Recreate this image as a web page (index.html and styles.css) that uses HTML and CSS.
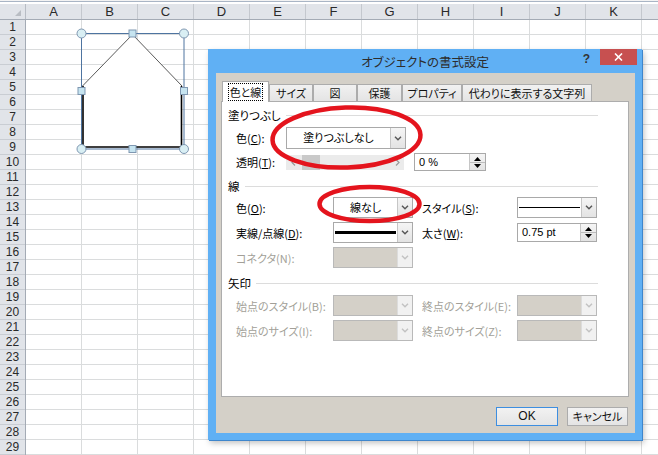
FILE: index.html
```html
<!DOCTYPE html>
<html lang="ja">
<head>
<meta charset="utf-8">
<title>オブジェクトの書式設定</title>
<link rel="stylesheet" href="styles.css">
</head>
<body>
<div class="sheet">
  <div class="topbar"></div>
  <div class="colhead">
    <div class="corner"></div>
    <div class="col">A</div><div class="col">B</div><div class="col">C</div><div class="col">D</div>
    <div class="col">E</div><div class="col">F</div><div class="col">G</div><div class="col">H</div>
    <div class="col">I</div><div class="col">J</div><div class="col">K</div><div class="col"></div>
  </div>
  <div class="grid">
    <div class="rownums">
      <div class="rn">1</div><div class="rn">2</div><div class="rn">3</div><div class="rn">4</div><div class="rn">5</div>
      <div class="rn">6</div><div class="rn">7</div><div class="rn">8</div><div class="rn">9</div><div class="rn">10</div>
      <div class="rn">11</div><div class="rn">12</div><div class="rn">13</div><div class="rn">14</div><div class="rn">15</div>
      <div class="rn">16</div><div class="rn">17</div><div class="rn">18</div><div class="rn">19</div><div class="rn">20</div>
      <div class="rn">21</div><div class="rn">22</div><div class="rn">23</div><div class="rn">24</div><div class="rn">25</div>
      <div class="rn">26</div><div class="rn">27</div><div class="rn">28</div><div class="rn">29</div>
    </div>
    <div class="cells"></div>
  </div>
</div>

<svg class="shape" width="200" height="160" viewBox="0 0 200 160">
  <polygon points="132.5,34.5 82.5,86 82.5,147 182,147 182,86" fill="#fff"/>
  <polyline points="82.5,86 132.5,34.5 182,86" fill="none" stroke="#5a5a5a" stroke-width="1"/>
  <polyline points="83,86 83,147 181.5,147 181.5,86" fill="none" stroke="#000" stroke-width="1.6"/>
  <rect x="81.5" y="33.5" width="102.5" height="115.5" fill="none" stroke="#4e74a0" stroke-width="1"/>
  <g fill="#d9eff4" stroke="#7f97b1" stroke-width="1">
    <circle cx="81.5" cy="33.5" r="4.5"/>
    <circle cx="184" cy="33.5" r="4.5"/>
    <circle cx="81.5" cy="149" r="4.5"/>
    <circle cx="184" cy="149" r="4.5"/>
  </g>
  <g fill="#c6e4f0" stroke="#7f97b1" stroke-width="1">
    <rect x="129" y="30" width="7" height="7"/>
    <rect x="78" y="87.5" width="7" height="7"/>
    <rect x="180.5" y="87.5" width="7" height="7"/>
    <rect x="129" y="145.5" width="7" height="7"/>
  </g>
</svg>

<div class="dialog">
  <div class="titlebar">
    <div class="title">オブジェクトの書式設定</div>
    <div class="controls">
      <span class="help">?</span>
      <span class="close"><svg width="9" height="8" viewBox="0 0 9 8"><path d="M1 0.5l7 7M8 0.5l-7 7" stroke="#fff" stroke-width="1.6"/></svg></span>
    </div>
  </div>
  <div class="client">
    <div class="tabs">
      <div class="tab active"><span class="focus">色と線</span></div>
      <div class="tab">サイズ</div>
      <div class="tab">図</div>
      <div class="tab">保護</div>
      <div class="tab">プロパティ</div>
      <div class="tab">代わりに表示する文字列</div>
    </div>
    <div class="panel">
      <div class="section-head">塗りつぶし</div>
      <div class="row fill first">
        <span class="lbl">色(<u>C</u>):</span>
        <div class="combo w120">
          <div class="val">塗りつぶしなし</div>
          <div class="btn"><svg width="8" height="5" viewBox="0 0 8 5"><path d="M1 0.8l3 3 3-3" fill="none" stroke="#555" stroke-width="1.4"/></svg></div>
        </div>
      </div>
      <div class="row fill second">
        <span class="lbl">透明(<u>T</u>):</span>
        <div class="slider">
          <svg class="sarrow" width="5" height="7" viewBox="0 0 5 7"><path d="M4 0.5l-3 3 3 3" fill="none" stroke="#9a9a9a" stroke-width="1.2"/></svg>
          <div class="thumb"></div>
          <svg class="sarrow right" width="5" height="7" viewBox="0 0 5 7"><path d="M1 0.5l3 3-3 3" fill="none" stroke="#9a9a9a" stroke-width="1.2"/></svg>
        </div>
        <div class="spin w72">
          <div class="val">0 %</div>
          <div class="arrows">
            <div class="up"><svg width="7" height="4" viewBox="0 0 7 4"><path d="M0 4h7L3.5 0z" fill="#000"/></svg></div>
            <div class="dn"><svg width="7" height="4" viewBox="0 0 7 4"><path d="M0 0h7L3.5 4z" fill="#000"/></svg></div>
          </div>
        </div>
      </div>

      <div class="section-head gap">線</div>
      <div class="row line r1">
        <span class="lbl">色(<u>O</u>):</span>
        <div class="combo w80">
          <div class="val">線なし</div>
          <div class="btn"><svg width="8" height="5" viewBox="0 0 8 5"><path d="M1 0.8l3 3 3-3" fill="none" stroke="#555" stroke-width="1.4"/></svg></div>
        </div>
        <span class="lbl lbl2">スタイル(<u>S</u>):</span>
        <div class="combo w80">
          <div class="val pic"><div class="stroke thin"></div></div>
          <div class="btn"><svg width="8" height="5" viewBox="0 0 8 5"><path d="M1 0.8l3 3 3-3" fill="none" stroke="#555" stroke-width="1.4"/></svg></div>
        </div>
      </div>
      <div class="row line">
        <span class="lbl">実線/点線(<u>D</u>):</span>
        <div class="combo w80">
          <div class="val pic"><div class="stroke thick"></div></div>
          <div class="btn"><svg width="8" height="5" viewBox="0 0 8 5"><path d="M1 0.8l3 3 3-3" fill="none" stroke="#555" stroke-width="1.4"/></svg></div>
        </div>
        <span class="lbl lbl2">太さ(<u>W</u>):</span>
        <div class="spin w80 short">
          <div class="val">0.75 pt</div>
          <div class="arrows">
            <div class="up"><svg width="7" height="4" viewBox="0 0 7 4"><path d="M0 4h7L3.5 0z" fill="#000"/></svg></div>
            <div class="dn"><svg width="7" height="4" viewBox="0 0 7 4"><path d="M0 0h7L3.5 4z" fill="#000"/></svg></div>
          </div>
        </div>
      </div>
      <div class="row line">
        <span class="lbl off">コネクタ(N):</span>
        <div class="combo w80 disabled">
          <div class="val"></div>
          <div class="btn"><svg width="8" height="5" viewBox="0 0 8 5"><path d="M1 0.8l3 3 3-3" fill="none" stroke="#c2c2c2" stroke-width="1.4"/></svg></div>
        </div>
      </div>

      <div class="section-head gap">矢印</div>
      <div class="row line first">
        <span class="lbl off">始点のスタイル(B):</span>
        <div class="combo w80 disabled">
          <div class="val"></div>
          <div class="btn"><svg width="8" height="5" viewBox="0 0 8 5"><path d="M1 0.8l3 3 3-3" fill="none" stroke="#c2c2c2" stroke-width="1.4"/></svg></div>
        </div>
        <span class="lbl lbl2 off">終点のスタイル(E):</span>
        <div class="combo w80 disabled">
          <div class="val"></div>
          <div class="btn"><svg width="8" height="5" viewBox="0 0 8 5"><path d="M1 0.8l3 3 3-3" fill="none" stroke="#c2c2c2" stroke-width="1.4"/></svg></div>
        </div>
      </div>
      <div class="row line">
        <span class="lbl off">始点のサイズ(I):</span>
        <div class="combo w80 disabled">
          <div class="val"></div>
          <div class="btn"><svg width="8" height="5" viewBox="0 0 8 5"><path d="M1 0.8l3 3 3-3" fill="none" stroke="#c2c2c2" stroke-width="1.4"/></svg></div>
        </div>
        <span class="lbl lbl2 off">終点のサイズ(Z):</span>
        <div class="combo w80 disabled">
          <div class="val"></div>
          <div class="btn"><svg width="8" height="5" viewBox="0 0 8 5"><path d="M1 0.8l3 3 3-3" fill="none" stroke="#c2c2c2" stroke-width="1.4"/></svg></div>
        </div>
      </div>
    </div>
    <div class="buttons">
      <div class="button default">OK</div>
      <div class="button cancel">キャンセル</div>
    </div>
  </div>
</div>

<svg class="marks" width="658" height="455" viewBox="0 0 658 455">
  <ellipse cx="346.5" cy="137.5" rx="74" ry="30" fill="none" stroke="#e4141d" stroke-width="4.5" transform="rotate(-2 346.5 137.5)"/>
  <ellipse cx="369.5" cy="204" rx="50" ry="17" fill="none" stroke="#e4141d" stroke-width="4.5"/>
</svg>
</body>
</html>
```
FILE: styles.css
```css
* { box-sizing: border-box; }
html, body { margin: 0; padding: 0; }
body {
  width: 658px;
  height: 455px;
  overflow: hidden;
  position: relative;
  background: #fff;
  font-family: "Noto Sans CJK JP", sans-serif;
}

/* ---------- spreadsheet ---------- */
.sheet { width: 700px; }
.topbar {
  height: 4px;
  background: linear-gradient(#f3f3f3 0 1px, #a9b5c5 1px 2px, #fff 2px);
}
.colhead {
  display: flex;
  height: 16px;
  background: #e1e4e9;
  border-bottom: 1px solid #a4abb5;
}
.corner {
  width: 26px;
  flex: none;
  border-right: 1px solid #b7bcc4;
  position: relative;
}
.corner::after {
  content: "";
  position: absolute;
  right: 4px;
  bottom: 3px;
  border-style: solid;
  border-width: 0 0 6px 6px;
  border-color: transparent transparent #b9bdc3 transparent;
}
.col {
  width: 56px;
  flex: none;
  border-right: 1px solid #c4c8ce;
  text-align: center;
  font: 13px/15px "Liberation Sans", sans-serif;
  color: #2a2a2a;
}
.grid { display: flex; }
.rownums {
  width: 26px;
  flex: none;
  background: #e1e4e9;
  border-right: 1px solid #a4abb5;
}
.rn {
  height: 15px;
  border-bottom: 1px solid #c9cdd3;
  text-align: center;
  font: 12px/14px "Liberation Sans", sans-serif;
  color: #2a2a2a;
}
.cells {
  flex: 1;
  height: 435px;
  background:
    repeating-linear-gradient(to right, transparent 0 55px, #dadcdd 55px 56px),
    repeating-linear-gradient(to bottom, transparent 0 14px, #dadcdd 14px 15px);
}

/* ---------- shape overlay ---------- */
.shape { position: absolute; left: 0; top: 0; }

/* ---------- dialog ---------- */
.dialog {
  position: absolute;
  left: 208px;
  top: 49px;
  width: 434px;
  height: 391px;
  background: #60b0f4;
  box-shadow: 1px 1px 0 #3e86cc, 2px 3px 6px rgba(0, 0, 0, 0.25);
  display: flex;
  flex-direction: column;
  font-feature-settings: "palt";
}
.titlebar {
  height: 24px;
  flex: none;
  display: grid;
  grid-template-columns: 1fr auto 1fr;
}
.title {
  grid-column: 2;
  font-size: 12.5px;
  line-height: 25px;
  color: #2d2d2d;
}
.controls {
  grid-column: 3;
  justify-self: end;
  display: flex;
  align-items: flex-start;
  margin-right: 5px;
}
.help {
  font: bold 12px/14px "Liberation Sans", sans-serif;
  color: #333;
  margin: 3px 10px 0 0;
}
.close {
  width: 37px;
  height: 16px;
  background: #c75050;
  display: flex;
  align-items: center;
  justify-content: center;
}

.client {
  flex: 1;
  margin: 0 7px 7px 8px;
  background: #d4d0c8;
  display: flex;
  flex-direction: column;
}
.tabs {
  height: 28px;
  flex: none;
  display: flex;
  align-items: flex-end;
  padding: 9px 0 0 6px;
}
.tab {
  height: 17px;
  border: 1px solid #acacac;
  border-bottom: none;
  background: linear-gradient(#f1f1f1, #e4e4e4);
  font-size: 11px;
  line-height: 16px;
  text-align: center;
  color: #111;
  flex: none;
}
.tab:nth-child(1) { width: 47px; }
.tab:nth-child(2) { width: 44px; }
.tab:nth-child(3) { width: 44px; }
.tab:nth-child(4) { width: 45px; }
.tab:nth-child(5) { width: 60px; }
.tab:nth-child(6) { width: 130px; }
.tab.active {
  height: 21px;
  margin-bottom: -1px;
  background: #fff;
  position: relative;
  z-index: 1;
  padding-top: 2px;
}
.focus {
  outline: 1px dotted #000;
  outline-offset: 0;
  padding: 0 1px;
}

.panel {
  height: 296px;
  flex: none;
  margin: 0 6px 0 5px;
  background: #fff;
  border: 1px solid #adadad;
  padding: 5px 0 0 6px;
}
.section-head {
  width: 370px;
  height: 16px;
  display: flex;
  align-items: center;
  font-size: 11.5px;
  color: #000;
}
.section-head::after {
  content: "";
  flex: 1;
  height: 1px;
  background: #dcdcdc;
  margin-left: 5px;
}
.section-head.gap { margin-top: 7px; }

.row {
  display: flex;
  align-items: center;
  margin-left: 8px;
  height: 21px;
  margin-top: 4px;
}
.row.fill.first { height: 22px; }
.row.fill.second { height: 18px; }
.row.line.r1 { margin-top: 3px; }
.lbl {
  flex: none;
  font-size: 11px;
  color: #000;
  white-space: nowrap;
}
.lbl u { text-underline-offset: 1px; }
.lbl.off { color: #a29f98; }
.fill .lbl { width: 50px; }
.line .lbl { width: 97px; }
.line .lbl2 { width: 95px; margin-left: 9px; }

.combo {
  height: 100%;
  display: flex;
  border: 1px solid #a9a9a9;
  background: #fff;
  flex: none;
}
.w120 { width: 120px; }
.w80 { width: 80px; }
.w72 { width: 72px; }
.combo .val {
  flex: 1;
  text-align: center;
  font-size: 11px;
  line-height: 19px;
  color: #000;
}
.combo .btn {
  width: 15px;
  flex: none;
  border-left: 1px solid #c6c6c6;
  background: linear-gradient(#f5f5f5, #e3e3e3);
  display: flex;
  align-items: center;
  justify-content: center;
}
.combo .val.pic {
  display: flex;
  align-items: center;
  padding: 0 1px;
}
.stroke { flex: 1; background: #000; }
.stroke.thin { height: 1px; }
.stroke.thick { height: 3px; }
.combo.disabled { border-color: #b9b9b9; }
.combo.disabled .val { background: #d4d0c8; }
.combo.disabled .btn {
  background: #f1f1f1;
  border-left-color: #dcdcdc;
}

.slider {
  width: 118px;
  height: 15px;
  background: #ebebeb;
  display: flex;
  align-items: center;
  padding: 0 4px 0 5px;
  flex: none;
}
.thumb {
  width: 18px;
  height: 15px;
  background: #c9c9c9;
  margin-left: 6px;
}
.sarrow.right { margin-left: auto; }

.spin {
  height: 100%;
  display: flex;
  border: 1px solid #a9a9a9;
  background: #fff;
  flex: none;
  margin-left: 10px;
}
.line .spin { margin-left: 0; height: 19px; }
.spin .val {
  flex: 1;
  padding-left: 4px;
  font: 11px/16px "Liberation Sans", sans-serif;
  color: #000;
}
.line .spin .val { line-height: 17px; }
.spin .arrows {
  width: 16px;
  display: flex;
  flex-direction: column;
  border-left: 1px solid #c6c6c6;
  background: linear-gradient(#f5f5f5, #e3e3e3);
}
.spin .up, .spin .dn {
  flex: 1;
  display: flex;
  justify-content: center;
}
.spin .up { align-items: flex-end; padding-bottom: 1px; border-bottom: 1px solid #bdbdbd; }
.spin .dn { align-items: flex-start; padding-top: 1px; }

.buttons {
  display: flex;
  justify-content: flex-end;
  gap: 9px;
  padding: 10px 7px 0 0;
}
.button {
  height: 19px;
  border: 1px solid #acacac;
  background: linear-gradient(#f2f2f2, #e4e4e4);
  font-size: 11px;
  line-height: 17px;
  text-align: center;
  color: #111;
}
.button.default { width: 62px; border-color: #3d8ee0; font-family: "Liberation Sans", sans-serif; font-size: 12px; }
.button.cancel { width: 61px; }

/* ---------- annotation marks ---------- */
.marks { position: absolute; left: 0; top: 0; pointer-events: none; }
```
